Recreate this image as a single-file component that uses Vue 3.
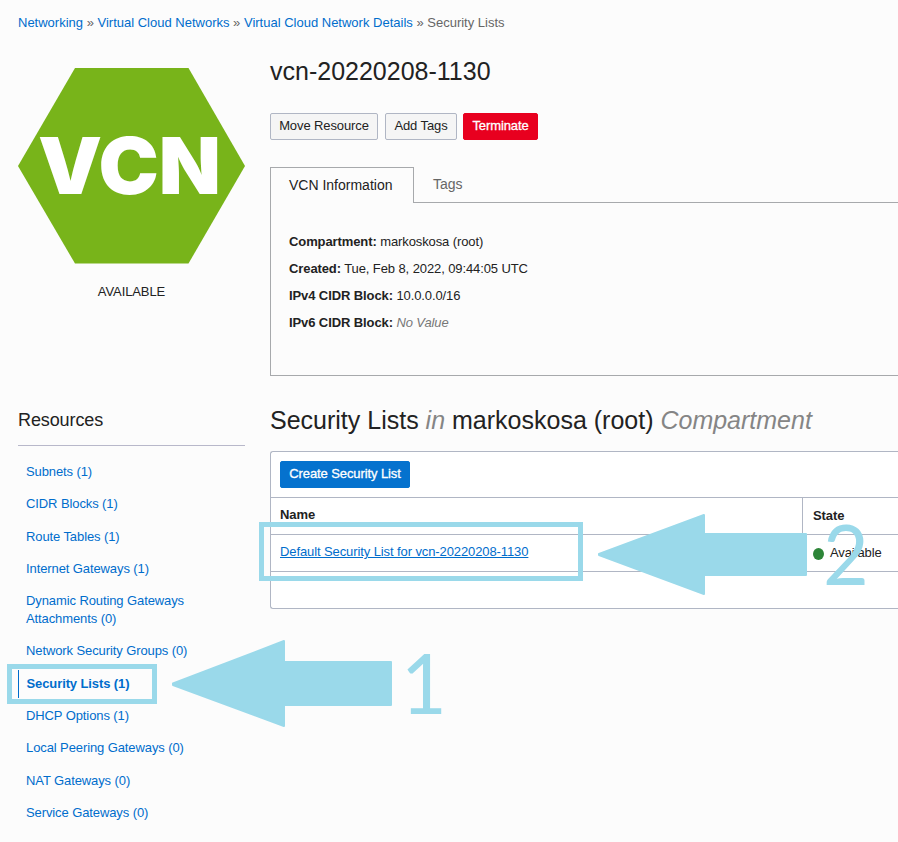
<script setup>
const crumbs = ['Networking', 'Virtual Cloud Networks', 'Virtual Cloud Network Details']
const resources = [
  { label: 'Subnets (1)' },
  { label: 'CIDR Blocks (1)' },
  { label: 'Route Tables (1)' },
  { label: 'Internet Gateways (1)' },
  { label: 'Dynamic Routing Gateways Attachments (0)' },
  { label: 'Network Security Groups (0)' },
  { label: 'Security Lists (1)', active: true },
  { label: 'DHCP Options (1)' },
  { label: 'Local Peering Gateways (0)' },
  { label: 'NAT Gateways (0)' },
  { label: 'Service Gateways (0)' },
]
const details = [
  { key: 'Compartment:', value: 'markoskosa (root)' },
  { key: 'Created:', value: 'Tue, Feb 8, 2022, 09:44:05 UTC' },
  { key: 'IPv4 CIDR Block:', value: '10.0.0.0/16' },
  { key: 'IPv6 CIDR Block:', value: 'No Value', empty: true },
]
</script>

<template>
  <div class="page">
    <nav class="crumbs">
      <template v-for="c in crumbs" :key="c"><a>{{ c }}</a> » </template><span>Security Lists</span>
    </nav>

    <div class="columns">
      <aside class="side">
        <svg class="hex" width="227" height="196" viewBox="0 0 227 196">
          <polygon points="57,0 170.500,0 227,98 170.500,195.500 57,195.500 0,98" fill="#78b41a" />
          <text x="20" y="126" textLength="183" lengthAdjust="spacingAndGlyphs" class="hex-text">VCN</text>
        </svg>
        <div class="status">AVAILABLE</div>
        <h2 class="side-title">Resources</h2>
        <ul class="links">
          <li v-for="r in resources" :key="r.label" :class="{ active: r.active }"><a>{{ r.label }}</a></li>
        </ul>
      </aside>

      <main class="main">
        <h1 class="title">vcn-20220208-1130</h1>
        <div class="actions">
          <button class="btn move">Move Resource</button>
          <button class="btn add">Add Tags</button>
          <button class="btn danger">Terminate</button>
        </div>

        <div class="tabs">
          <div class="tab current">VCN Information</div>
          <div class="tab other">Tags</div>
        </div>
        <section class="info">
          <p v-for="d in details" :key="d.key">
            <b>{{ d.key }}</b> <span :class="{ none: d.empty }">{{ d.value }}</span>
          </p>
        </section>

        <h2 class="list-title">Security Lists <i>in</i> markoskosa (root) <i>Compartment</i></h2>
        <section class="table">
          <div class="toolbar"><button class="btn primary">Create Security List</button></div>
          <div class="row head"><div class="name">Name</div><div class="state">State</div></div>
          <div class="row">
            <div class="name"><a>Default Security List for vcn-20220208-1130</a></div>
            <div class="state"><span class="dot"></span>Available</div>
          </div>
          <div class="foot"></div>
        </section>
      </main>
    </div>

    <svg class="marks" width="898" height="842" viewBox="0 0 898 842">
      <g fill="none" stroke="#9ad9ea" stroke-width="5">
        <rect x="9.500" y="666.500" width="145" height="35" />
        <rect x="261.500" y="524.500" width="319" height="54" />
      </g>
      <g fill="#9ad9ea" stroke="#9ad9ea" stroke-width="2" stroke-linejoin="round">
        <polygon points="173,683.500 284,641 284,662 391,662 391,705 284,705 284,726 173,685" />
        <polygon points="599,554 704,515 704,534 806,534 806,575 704,575 704,594 599,555" />
      </g>
      <g class="digit">
        <text transform="translate(401 714) scale(.94 1)">1</text>
        <text transform="translate(823 585) scale(.94 1)">2</text>
      </g>
    </svg>
  </div>
</template>

<style>
body { background: #fcfcfc; overflow: hidden; }
</style>

<style scoped>
.page { position: relative; box-sizing: border-box; width: 898px; height: 842px; overflow: hidden; padding: 14px 0 0 18px; background: #fcfcfc; color: #222; font: 13px/18px "Liberation Sans", Arial, sans-serif; letter-spacing: -0.1px; }
h1, h2, p, ul { margin: 0; padding: 0; font-weight: normal; }
a { color: #006dcc; }
.crumbs { color: #666; white-space: nowrap; letter-spacing: 0; }
.columns { display: flex; gap: 25px; padding-top: 22px; }
.side { flex: 0 0 227px; padding-top: 14px; }
.hex { display: block; }
.hex-text { font: 900 79px "Inter", sans-serif; fill: #fff; letter-spacing: 0; }
.status { margin-top: 19px; text-align: center; }
.side-title { margin-top: 107px; height: 37px; border-bottom: 1px solid #b8b8ca; font-size: 18px; line-height: 24px; }
.links { list-style: none; padding-top: 12px; }
.links li { margin-bottom: 4.300px; padding: 5px 50px 5px 8px; line-height: 18px; }
.links li.active { padding-left: 7.500px; border-left: 1px solid #006dcc; font-weight: bold; }
.main { flex: 1; min-width: 0; }
.title { font-size: 25px; line-height: 34px; letter-spacing: 0; }
.actions { display: flex; margin-top: 25px; height: 27px; }
.btn { box-sizing: border-box; height: 27px; padding: 0 0 1px; border: 1px solid #b0b6c4; border-radius: 2px; background: #f5f5f5; color: #222; font: inherit; letter-spacing: inherit; }
.move { width: 108px; }
.add { width: 72px; margin-left: 7px; }
.danger { width: 75px; margin-left: 6px; background: #e8001f; border-color: #e8001f; color: #fff; -webkit-text-stroke: .3px #fff; }
.primary { width: 130px; background: #0572ce; border-color: #0572ce; color: #fff; -webkit-text-stroke: .3px #fff; }
.tabs { display: flex; height: 36px; margin-top: 27px; font-size: 14px; line-height: 34px; letter-spacing: 0; }
.tab { box-sizing: border-box; }
.current { width: 144px; padding-left: 18px; border: 1px solid #a7a9ac; border-bottom: 0; }
.other { flex: 1; padding-left: 19px; border-bottom: 1px solid #a7a9ac; color: #666; }
.info { box-sizing: border-box; height: 173px; padding: 30px 0 0 18px; border-left: 1px solid #a7a9ac; border-bottom: 1px solid #a7a9ac; }
.info p { line-height: 18px; margin-bottom: 9px; }
.none { color: #777; font-style: italic; }
.list-title { margin-top: 27px; font-size: 25px; line-height: 34px; letter-spacing: 0; white-space: nowrap; }
.list-title i { color: #858585; }
.table { box-sizing: border-box; height: 158px; margin-top: 14px; border: 1px solid #b0b6c4; border-right: 0; border-radius: 3px 0 0 3px; background: #fff; }
.toolbar { box-sizing: border-box; height: 46px; padding: 9px; border-bottom: 1px solid #b0b6c4; }
.row { box-sizing: border-box; height: 37px; display: flex; border-bottom: 1px solid #b0b6c4; line-height: 34px; }
.name { width: 522px; padding-left: 9px; box-sizing: content-box; }
.row .name { flex: 0 0 522px; }
.name a { text-decoration: underline; }
.state { display: flex; align-items: center; flex: 1; padding-left: 10px; }
.head { font-weight: bold; }
.head .state { border-left: 1px solid #b0b6c4; }
.dot { width: 11px; height: 12px; margin: 1px 6px 0 1px; border-radius: 50%; background: #2d8538; }
.marks { position: absolute; left: 0; top: 0; pointer-events: none; }
.digit { font: 84px "Lato", sans-serif; fill: #9ad9ea; letter-spacing: 0; }
</style>
